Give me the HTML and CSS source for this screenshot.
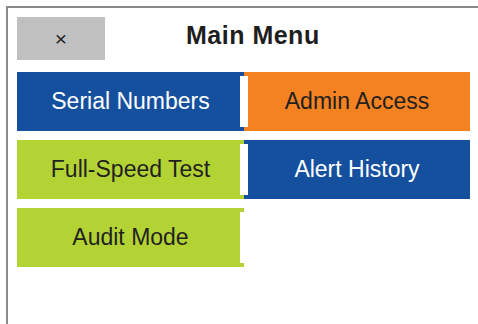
FILE: index.html
```html
<!DOCTYPE html>
<html lang="en">
<head>
    <meta charset="UTF-8">
    <meta name="viewport" content="width=device-width, initial-scale=1.0">
    <title>Main Menu</title>
    <link rel="stylesheet" href="styles.css">
</head>
<body>
    <div class="frame">
        <div class="header">
            <button class="close-button">&times;</button>
            <h1>Main Menu</h1>
        </div>

        <div class="menu">
            <button class="menu-item blue left">Serial Numbers</button>
            <button class="menu-item orange">Admin Access</button>
            <button class="menu-item green left">Full-Speed Test</button>
            <button class="menu-item blue">Alert History</button>
            <button class="menu-item green left">Audit Mode</button>
        </div>
    </div>
</body>
</html>
```

FILE: styles.css
```css
html, body {
    overflow: hidden;
}

body {
    margin: 6px 0 0 6px;
    font-family: "Liberation Sans", Arial, sans-serif;
    background: #fff;
}

.frame {
    box-sizing: border-box;
    width: 472px;
    height: 318px;
    padding: 9px;
    border-top: 2px solid #8a8a8a;
    border-left: 2px solid #8a8a8a;
}

.header {
    display: flex;
    align-items: center;
    height: 43px;
}

.close-button {
    width: 88px;
    height: 43px;
    border: none;
    background-color: #c0c0c0;
    color: #222;
    font-family: "Liberation Sans", Arial, sans-serif;
    font-size: 21px;
    padding: 0;
}

h1 {
    margin: 0 0 6px 81px;
    font-size: 25px;
    font-weight: bold;
    letter-spacing: 0.5px;
    color: #1e1e1e;
}

.menu {
    display: grid;
    grid-template-columns: 227px 226px;
    grid-auto-rows: 59px;
    row-gap: 9px;
    width: 453px;
    margin-top: 12px;
}

.menu-item {
    position: relative;
    border: none;
    padding: 0;
    font-family: "Liberation Sans", Arial, sans-serif;
    font-size: 23px;
    color: #231f20;
}

/* white tab sitting over the column seam */
.menu-item.left::after {
    content: "";
    position: absolute;
    top: 4px;
    bottom: 4px;
    right: -4px;
    width: 8px;
    background: #fff;
    z-index: 1;
}

.blue {
    background-color: #15509e;
    color: #fff;
}

.orange {
    background-color: #f58220;
}

.green {
    background-color: #b3d335;
}
```
